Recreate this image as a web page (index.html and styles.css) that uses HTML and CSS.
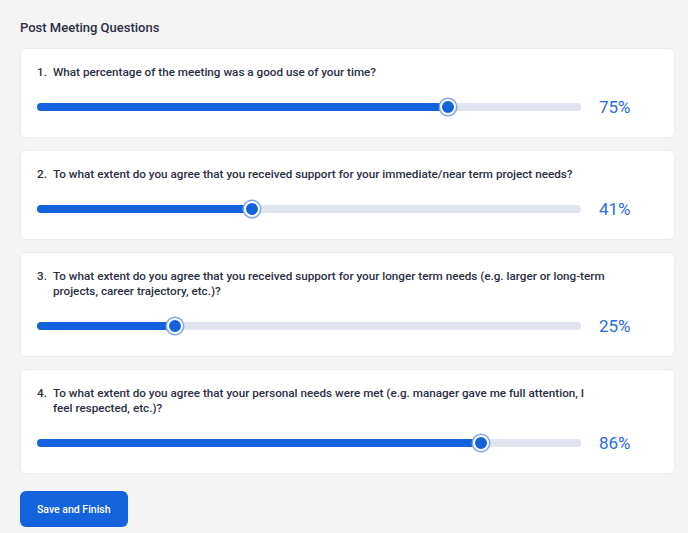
FILE: index.html
```html
<!DOCTYPE html>
<html lang="en">
<head>
    <meta charset="UTF-8">
    <meta name="viewport" content="width=device-width, initial-scale=1.0">
    <title>Post Meeting Questions</title>
    <link rel="stylesheet" href="styles.css">
</head>
<body>
    <div class="container">
        <h1 class="title">Post Meeting Questions</h1>

        <div class="card">
            <div class="question"><span class="num">1.</span><span>What percentage of the meeting was a good use of your time?</span></div>
            <div class="slider-row">
                <div class="track"><div class="fill" style="width: 75.5%"><span class="thumb"></span></div></div>
                <div class="pct">75%</div>
            </div>
        </div>

        <div class="card">
            <div class="question"><span class="num">2.</span><span>To what extent do you agree that you received support for your immediate/near term project needs?</span></div>
            <div class="slider-row">
                <div class="track"><div class="fill" style="width: 39.5%"><span class="thumb"></span></div></div>
                <div class="pct">41%</div>
            </div>
        </div>

        <div class="card">
            <div class="question"><span class="num">3.</span><span>To what extent do you agree that you received support for your longer term needs (e.g. larger or long-term projects, career trajectory, etc.)?</span></div>
            <div class="slider-row">
                <div class="track"><div class="fill" style="width: 25.4%"><span class="thumb"></span></div></div>
                <div class="pct">25%</div>
            </div>
        </div>

        <div class="card">
            <div class="question"><span class="num">4.</span><span>To what extent do you agree that your personal needs were met (e.g. manager gave me full attention, I feel respected, etc.)?</span></div>
            <div class="slider-row">
                <div class="track"><div class="fill" style="width: 81.6%"><span class="thumb"></span></div></div>
                <div class="pct">86%</div>
            </div>
        </div>

        <button class="btn">Save and Finish</button>
    </div>
</body>
</html>
```

FILE: styles.css
```css
/* General */
body {
    font-family: 'Roboto', 'Inter', sans-serif;
    margin: 0;
    padding: 0;
    background-color: #f4f4f5;
    color: #2b2f45;
}

.container {
    padding: 20px 13px 0 20px;
}

.title {
    font-size: 13px;
    line-height: 16px;
    font-weight: 500;
    margin: 0 0 12px;
}

/* Question cards */
.card {
    background-color: #fff;
    border: 1px solid #eaecf0;
    border-radius: 6px;
    padding: 16px 16px 20px;
    margin-bottom: 12px;
}

.question {
    display: flex;
    max-width: 568px;
    font-size: 11.7px;
    line-height: 15px;
    font-weight: 500;
}

.question .num {
    flex: 0 0 16px;
}

.slider-row {
    display: flex;
    align-items: center;
    height: 20px;
    margin-top: 17px;
}

.track {
    flex: 1;
    height: 8px;
    border-radius: 4px;
    background-color: #dfe4ee;
}

.fill {
    position: relative;
    height: 100%;
    border-radius: 4px;
    background-color: #1463dc;
}

.thumb {
    position: absolute;
    right: 0;
    top: 50%;
    width: 12px;
    height: 12px;
    border-radius: 50%;
    background-color: #1463dc;
    border: 2px solid #fff;
    box-shadow: 0 0 0 1.5px #7ea6ec;
    transform: translate(50%, -50%);
}

.pct {
    flex: 0 0 77px;
    box-sizing: border-box;
    padding-left: 18px;
    font-size: 17px;
    color: #2a6de0;
}

/* Button */
.btn {
    margin-top: 5px;
    height: 36px;
    padding: 0 17px;
    border: none;
    border-radius: 6px;
    background-color: #1463dc;
    color: #fff;
    font-family: 'Roboto', 'Inter', sans-serif;
    font-size: 10.5px;
    font-weight: 500;
    cursor: pointer;
}
```
